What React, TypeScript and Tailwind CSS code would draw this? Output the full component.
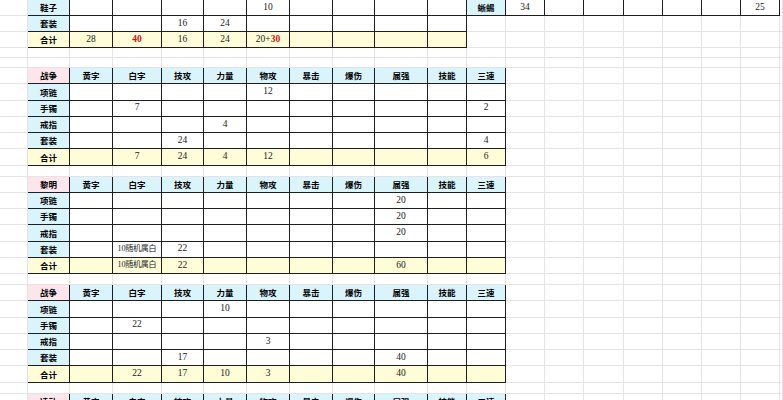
import React, { ReactNode } from "react";

const GRID =
  "grid grid-cols-[28px_42px_43px_49px_42px_43px_43px_43px_42px_53px_39px_39px_39px_39px_40px_39px_39px_39px_39px_3px]";

const NCOLS = 20;
const HEADERS = ["黄字", "白字", "技攻", "力量", "物攻", "暴击", "爆伤", "属强", "技能", "三速"];

const LIGHT = "border-r border-b border-[#e4e4e4] bg-white";
const DARK = "border-r border-b border-[#1e1e1e]";
const CYAN = "bg-[#d9f4fb]";
const PINK = "bg-[#fde5ec]";
const YELLOW = "bg-[#fffcd8]";
const WHITE = "bg-white";

const label = "font-['Noto_Sans_CJK_SC',sans-serif] font-bold text-[8.5px] text-black";
const num = "font-['Liberation_Serif','Noto_Sans_CJK_SC',serif] text-[9.5px] text-[#222]";

const Red = ({ children }: { children: ReactNode }) => (
  <span className="font-bold text-[#e01010]">{children}</span>
);

const Rand = () => (
  <span className="text-[8px] tracking-[-0.2px]">10随机属白</span>
);

type RowKind = "gap" | "head" | "body" | "total" | "top0" | "top";

interface RowSpec {
  kind: RowKind;
  h: string;
  name?: string;
  vals?: Record<number, ReactNode>;
}

const BH = "h-[16.25px]";

function block(name: string, rows: [string, Record<number, ReactNode>][]): RowSpec[] {
  const out: RowSpec[] = [{ kind: "head", h: BH, name }];
  rows.forEach(([n, v]) => {
    out.push({ kind: n === "合计" ? "total" : "body", h: BH, name: n, vals: v });
  });
  return out;
}

const ROWS: RowSpec[] = [
  {
    kind: "top0",
    h: "h-[16px]",
    name: "鞋子",
    vals: { 6: "10", 12: "34", 18: "25" },
  },
  { kind: "top", h: "h-[16px]", name: "套装", vals: { 4: "16", 5: "24" } },
  {
    kind: "top",
    h: "h-[16px]",
    name: "合计",
    vals: {
      2: "28",
      3: <Red>40</Red>,
      4: "16",
      5: "24",
      6: (
        <>
          20+<Red>30</Red>
        </>
      ),
    },
  },
  { kind: "gap", h: "h-[10px]" },
  { kind: "gap", h: "h-[10px]" },
  ...block("战争", [
    ["项链", { 6: "12" }],
    ["手镯", { 3: "7", 11: "2" }],
    ["戒指", { 5: "4" }],
    ["套装", { 4: "24", 11: "4" }],
    ["合计", { 3: "7", 4: "24", 5: "4", 6: "12", 11: "6" }],
  ]),
  { kind: "gap", h: "h-[11px]" },
  ...block("黎明", [
    ["项链", { 9: "20" }],
    ["手镯", { 9: "20" }],
    ["戒指", { 9: "20" }],
    ["套装", { 3: <Rand />, 4: "22" }],
    ["合计", { 3: <Rand />, 4: "22", 9: "60" }],
  ]),
  { kind: "gap", h: "h-[11px]" },
  ...block("战争", [
    ["项链", { 5: "10" }],
    ["手镯", { 3: "22" }],
    ["戒指", { 6: "3" }],
    ["套装", { 4: "17", 9: "40" }],
    ["合计", { 3: "22", 4: "17", 5: "10", 6: "3", 9: "40" }],
  ]),
  { kind: "gap", h: "h-[11px]" },
  { kind: "head", h: BH, name: "凌动" },
];

function cellInfo(row: RowSpec, c: number): { cls: string; content: ReactNode; isLabel: boolean } {
  const v = row.vals?.[c];
  const inTable = c >= 1 && c <= 11;
  switch (row.kind) {
    case "gap":
      return { cls: LIGHT, content: null, isLabel: false };
    case "head":
      if (!inTable) return { cls: LIGHT, content: null, isLabel: false };
      if (c === 1) return { cls: `${DARK} ${PINK}`, content: row.name, isLabel: true };
      return { cls: `${DARK} ${CYAN}`, content: HEADERS[c - 2], isLabel: true };
    case "body":
    case "total": {
      if (!inTable) return { cls: LIGHT, content: null, isLabel: false };
      const bg = row.kind === "total" ? YELLOW : c === 1 ? CYAN : WHITE;
      if (c === 1) return { cls: `${DARK} ${bg}`, content: row.name, isLabel: true };
      return { cls: `${DARK} ${bg}`, content: v, isLabel: false };
    }
    case "top0": {
      if (c === 0 || c === 19) return { cls: LIGHT, content: null, isLabel: false };
      if (c === 1) return { cls: `${DARK} ${CYAN}`, content: row.name, isLabel: true };
      if (c === 11) return { cls: `${DARK} ${CYAN}`, content: "蜥蜴", isLabel: true };
      return { cls: `${DARK} ${WHITE}`, content: v, isLabel: false };
    }
    case "top": {
      if (c === 0 || c > 10) return { cls: LIGHT, content: null, isLabel: false };
      const total = row.name === "合计";
      const bg = total ? YELLOW : c === 1 ? CYAN : WHITE;
      if (c === 1) return { cls: `${DARK} ${bg}`, content: row.name, isLabel: true };
      return { cls: `${DARK} ${bg}`, content: v, isLabel: false };
    }
  }
}

export default function App() {
  return (
    <div className="w-[783px] h-[400px] overflow-hidden bg-white">
      {ROWS.map((row, ri) => (
        <div key={ri} className={`${GRID} ${row.h}`}>
          {Array.from({ length: NCOLS }).map((_, c) => {
            const info = cellInfo(row, c);
            return (
              <div
                key={c}
                className={`${info.cls} flex items-center justify-center overflow-hidden whitespace-nowrap leading-none ${
                  info.isLabel ? label : num
                }`}
              >
                {info.content}
              </div>
            );
          })}
        </div>
      ))}
    </div>
  );
}
